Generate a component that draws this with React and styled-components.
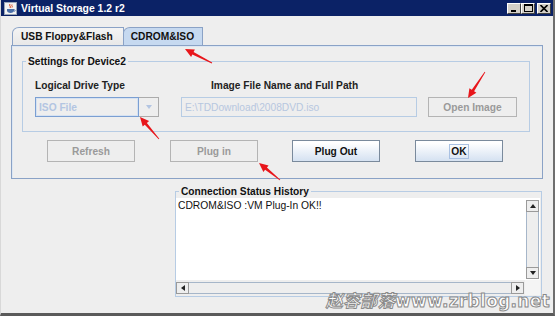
import styled, { createGlobalStyle } from "styled-components";

const GlobalStyle = createGlobalStyle`
  html, body {
    margin: 0;
    padding: 0;
    background: #eeeeee;
  }
  body {
    font-family: "Liberation Sans", Arial, sans-serif;
  }
`;

const Window = styled.div`
  position: relative;
  display: flex;
  flex-direction: column;
  width: 555px;
  height: 316px;
  box-sizing: border-box;
  overflow: hidden;
  background: #eeeeee;
  border-right: 2px solid #6e6e6e;
  border-bottom: 3px solid #5a5a5a;
  border-left: 1px solid #d8d8d8;
`;

const TitleBar = styled.div`
  display: flex;
  align-items: center;
  height: 16px;
  flex: none;
  padding: 0 2px 0 3px;
  background: #0b2266;
  color: #ffffff;
  font-size: 10.4px;
  font-weight: bold;
  gap: 4px;
`;

const TitleText = styled.span`
  flex: 1;
`;

const TitleButtons = styled.div`
  display: flex;
`;

const TitleButton = styled.div`
  display: flex;
  align-items: center;
  justify-content: center;
  width: 14px;
  height: 11px;
  margin-left: ${(p) => (p.$gap ? "2px" : "0")};
  box-sizing: border-box;
  background: #d4d0c8;
  border: 1px solid;
  border-color: #ffffff #404040 #404040 #ffffff;
`;

const Body = styled.div`
  flex: 1;
  display: flex;
  flex-direction: column;
  padding: 11px 10px 0 10px;
`;

const TabStrip = styled.div`
  display: flex;
  align-items: flex-end;
  height: 18px;
  padding-left: 1px;
`;

const Tab = styled.div`
  height: 18px;
  box-sizing: border-box;
  padding: 0 ${(p) => (p.$active ? "8px" : "10px")} 0 ${(p) => (p.$active ? "7px" : "8px")};
  display: flex;
  align-items: center;
  font-size: 10.2px;
  font-weight: bold;
  color: #111111;
  border: 1px solid #8aa2c6;
  border-bottom: none;
  border-top-left-radius: 7px 6px;
  margin-left: ${(p) => (p.$active ? "-1px" : "0")};
  background: ${(p) =>
    p.$active ? "#c6d9f0" : "linear-gradient(#f4f4f4, #e8e8e8)"};
  position: relative;
  z-index: ${(p) => (p.$active ? 2 : 1)};
`;

const TabPanel = styled.div`
  height: 134px;
  box-sizing: border-box;
  border: 1px solid #8aa2c6;
  box-shadow: inset 1px 1px 0 #dde7f3;
  padding: 9px 12px 0 10px;
  display: flex;
  flex-direction: column;
`;

const Group = styled.fieldset`
  margin: 0;
  min-width: 0;
  border: 1px solid #b7cce4;
  padding: ${(p) => p.$pad};
`;

const Legend = styled.legend`
  padding: 0 2px;
  margin-left: 3px;
  font-size: 10.2px;
  font-weight: bold;
  line-height: 13px;
  color: #111111;
`;

const SettingsGrid = styled.div`
  display: grid;
  grid-template-columns: 124px 236px 89px;
  grid-template-rows: 14px 20px;
  column-gap: 22px;
  row-gap: 4px;
  padding: 11px 0 14px 12px;
`;

const FieldLabel = styled.div`
  font-size: 10.2px;
  font-weight: bold;
  color: #222222;
  line-height: 14px;
  padding-left: ${(p) => p.$indent || "0"};
`;

const Combo = styled.div`
  display: flex;
  height: 20px;
`;

const ComboText = styled.div`
  flex: 1;
  box-sizing: border-box;
  border: 1px solid #7b9fd2;
  box-shadow: inset 0 0 0 1px #d6e2f2;
  display: flex;
  align-items: center;
  padding-left: 3px;
  font-size: 10.2px;
  font-weight: bold;
  color: #b3c5e2;
`;

const ComboArrow = styled.div`
  width: 20px;
  box-sizing: border-box;
  border: 1px solid #ababab;
  border-left: none;
  display: flex;
  align-items: center;
  justify-content: center;
  background: #eeeeee;
`;

const TextField = styled.div`
  box-sizing: border-box;
  height: 20px;
  border: 1px solid #b7cce4;
  display: flex;
  align-items: center;
  padding-left: 3px;
  font-size: 10.2px;
  color: #b7c7e0;
  white-space: nowrap;
  overflow: hidden;
`;

const Button = styled.div`
  box-sizing: border-box;
  width: ${(p) => p.$w || "88px"};
  height: ${(p) => p.$h || "22px"};
  margin-left: ${(p) => p.$ml || "0"};
  display: flex;
  align-items: center;
  justify-content: center;
  font-size: 10.2px;
  font-weight: bold;
  color: ${(p) => (p.$disabled ? "#9a9a9a" : "#111111")};
  border: 1px solid ${(p) => (p.$disabled ? "#b4b4b4" : "#7a8a9c")};
  background: ${(p) =>
    p.$disabled ? "#eeeeee" : "linear-gradient(#ffffff 10%, #d7e3f2 95%)"};
`;

const Focus = styled.span`
  padding: 1px 1px;
  outline: 1px solid #a9c1e3;
`;

const ButtonRow = styled.div`
  display: flex;
  margin-top: 8px;
  padding-left: 25px;
`;

const StatusWrap = styled.div`
  margin: 6px 0 0 164px;
  width: 367px;
`;

const ScrollPane = styled.div`
  display: grid;
  grid-template-columns: 1fr 15px;
  grid-template-rows: 82px 15px;
  height: 97px;
`;

const TextArea = styled.div`
  background: #ffffff;
  font-size: 10.3px;
  color: #111111;
  padding: 1px 2px;
  line-height: 14px;
`;

const VScroll = styled.div`
  display: flex;
  flex-direction: column;
  background: #ffffff;
  padding: 2px 1px 1px 1px;
`;

const HScroll = styled.div`
  display: flex;
  padding: 2px 1px 1px 0;
  background: #eeeeee;
`;

const Corner = styled.div`
  background: #f4f4f4;
`;

const ArrowBtn = styled.div`
  width: ${(p) => (p.$h ? "13px" : "100%")};
  height: ${(p) => (p.$h ? "100%" : "12px")};
  flex: none;
  box-sizing: border-box;
  border: 1px solid #9a9a9a;
  background: #eeeeee;
  display: flex;
  align-items: center;
  justify-content: center;
`;

const Track = styled.div`
  flex: 1;
  box-sizing: border-box;
  background: #eeeeee;
  border: 1px solid #a6b6c9;
  ${(p) => (p.$h ? "border-left: none; border-right: none;" : "border-top: none; border-bottom: none;")}
`;

const Overlay = styled.svg`
  position: absolute;
  left: 0;
  top: 0;
  pointer-events: none;
`;

const Watermark = styled.div`
  position: absolute;
  right: 3px;
  bottom: 1px;
  font-size: 17px;
  font-weight: bold;
  font-family: "DejaVu Sans", "Noto Sans CJK SC", sans-serif;
  color: #ffffff;
  -webkit-text-stroke: 1px #8a8a8a;
  letter-spacing: 0.3px;
  white-space: nowrap;
  pointer-events: none;

  .cjk {
    font-family: "Noto Sans CJK SC", sans-serif;
    font-style: italic;
  }
`;

const Tri = ({ dir, color = "#222" }) => {
  const pts = {
    up: "1,6 4,2 7,6",
    down: "1,2 4,6 7,2",
    left: "6,1 2,4 6,7",
    right: "2,1 6,4 2,7",
  }[dir];
  return (
    <svg width="8" height="8" viewBox="0 0 8 8">
      <polygon points={pts} fill={color} />
    </svg>
  );
};

const arrowPoints = (tx, ty, hx, hy) => {
  const dx = hx - tx;
  const dy = hy - ty;
  const len = Math.hypot(dx, dy);
  const ux = dx / len;
  const uy = dy / len;
  const nx = -uy;
  const ny = ux;
  const headLen = 9;
  const bx = hx - ux * headLen;
  const by = hy - uy * headLen;
  const p = (x, y) => `${x.toFixed(1)},${y.toFixed(1)}`;
  return [
    p(tx + nx * 0.4, ty + ny * 0.4),
    p(bx + nx * 1.4, by + ny * 1.4),
    p(bx + nx * 4.2, by + ny * 4.2),
    p(hx, hy),
    p(bx - nx * 4.2, by - ny * 4.2),
    p(bx - nx * 1.4, by - ny * 1.4),
    p(tx - nx * 0.4, ty - ny * 0.4),
  ].join(" ");
};

const arrows = [
  [211, 63, 184, 49],
  [158, 139, 139, 117],
  [279, 180, 258, 163],
  [484, 72, 467, 98],
];

const JavaIcon = () => (
  <svg width="13" height="13" viewBox="0 0 13 13">
    <rect x="0.5" y="0.5" width="12" height="12" fill="#f2f2f2" stroke="#9aa6b8" />
    <path d="M6 2 C4.5 3.5 7.5 4.5 6 6 M8 2.5 C7 3.5 9 4.2 8 5.5" stroke="#d9461c" strokeWidth="1" fill="none" />
    <path d="M3 7 H10 V8.5 C10 10 8.5 11 6.5 11 C4.5 11 3 10 3 8.5 Z" fill="#4a6fa8" />
    <path d="M10 7.6 C11.6 7.6 11.6 9.4 10 9.4" stroke="#4a6fa8" strokeWidth="0.8" fill="none" />
  </svg>
);

const App = () => {
  return (
    <Window>
      <GlobalStyle />
      <TitleBar>
        <JavaIcon />
        <TitleText>Virtual Storage 1.2 r2</TitleText>
        <TitleButtons>
          <TitleButton>
            <svg width="8" height="7" viewBox="0 0 8 7">
              <rect x="1" y="5" width="5" height="2" fill="#000" />
            </svg>
          </TitleButton>
          <TitleButton>
            <svg width="9" height="8" viewBox="0 0 9 8">
              <rect x="0.5" y="0.5" width="8" height="7" fill="none" stroke="#000" />
              <rect x="0" y="0" width="9" height="2" fill="#000" />
            </svg>
          </TitleButton>
          <TitleButton $gap>
            <svg width="8" height="7" viewBox="0 0 8 7">
              <path d="M0.5 0 L7.5 7 M7.5 0 L0.5 7" stroke="#000" strokeWidth="1.6" />
            </svg>
          </TitleButton>
        </TitleButtons>
      </TitleBar>

      <Body>
        <TabStrip>
          <Tab>USB Floppy&amp;Flash</Tab>
          <Tab $active>CDROM&amp;ISO</Tab>
        </TabStrip>
        <TabPanel>
          <Group $pad="0">
            <Legend>Settings for Device2</Legend>
            <SettingsGrid>
              <FieldLabel>Logical Drive Type</FieldLabel>
              <FieldLabel $indent="30px">Image File Name and Full Path</FieldLabel>
              <div />
              <Combo>
                <ComboText>ISO File</ComboText>
                <ComboArrow>
                  <Tri dir="down" color="#b3c5e2" />
                </ComboArrow>
              </Combo>
              <TextField>E:\TDDownload\2008DVD.iso</TextField>
              <Button $disabled $w="89px" $h="20px" $ml="-11px">
                Open Image
              </Button>
            </SettingsGrid>
          </Group>
          <ButtonRow>
            <Button $disabled>Refresh</Button>
            <Button $disabled $ml="35px">Plug in</Button>
            <Button $ml="34px">Plug Out</Button>
            <Button $ml="35px">
              <Focus>OK</Focus>
            </Button>
          </ButtonRow>
        </TabPanel>

        <StatusWrap>
          <Group $pad="0 1px 1px 0">
            <Legend>Connection Status History</Legend>
            <ScrollPane>
              <TextArea>CDROM&amp;ISO :VM Plug-In OK!!</TextArea>
              <VScroll>
                <ArrowBtn>
                  <Tri dir="up" />
                </ArrowBtn>
                <Track />
                <ArrowBtn>
                  <Tri dir="down" />
                </ArrowBtn>
              </VScroll>
              <HScroll>
                <ArrowBtn $h>
                  <Tri dir="left" />
                </ArrowBtn>
                <Track $h />
                <ArrowBtn $h>
                  <Tri dir="right" />
                </ArrowBtn>
              </HScroll>
              <Corner />
            </ScrollPane>
          </Group>
        </StatusWrap>
      </Body>

      <Watermark>
        <span className="cjk">赵容部落</span>www.zrblog.net
      </Watermark>

      <Overlay width="555" height="316" viewBox="0 0 555 316">
        {arrows.map(([tx, ty, hx, hy], i) => (
          <polygon key={i} points={arrowPoints(tx, ty, hx, hy)} fill="#e8161b" />
        ))}
      </Overlay>
    </Window>
  );
};

export default App;
